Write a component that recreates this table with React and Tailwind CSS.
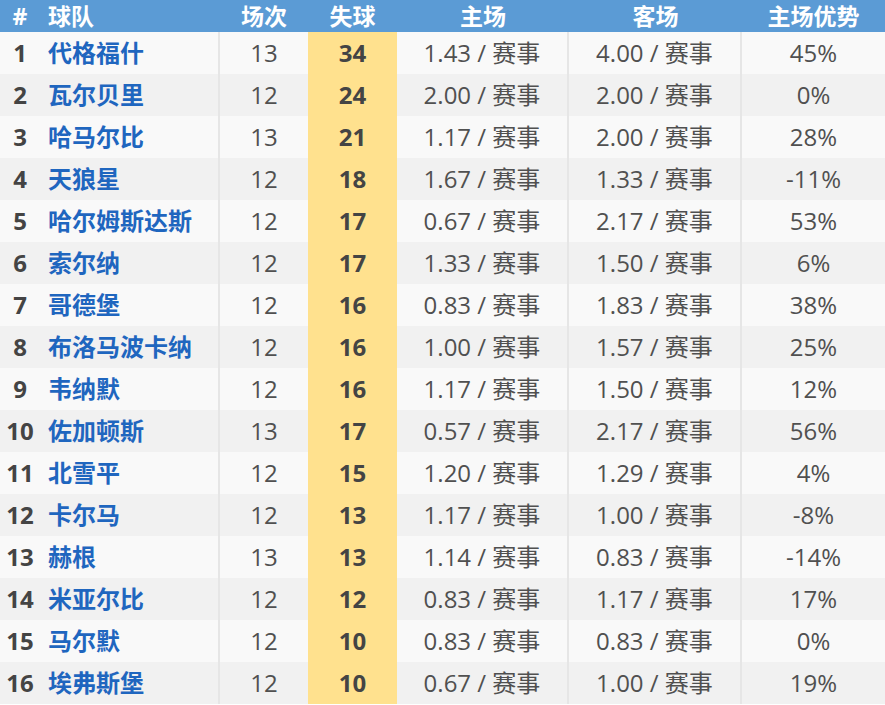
const rows = [
  [1, "代格福什", 13, 34, "1.43", "4.00", "45%"],
  [2, "瓦尔贝里", 12, 24, "2.00", "2.00", "0%"],
  [3, "哈马尔比", 13, 21, "1.17", "2.00", "28%"],
  [4, "天狼星", 12, 18, "1.67", "1.33", "-11%"],
  [5, "哈尔姆斯达斯", 12, 17, "0.67", "2.17", "53%"],
  [6, "索尔纳", 12, 17, "1.33", "1.50", "6%"],
  [7, "哥德堡", 12, 16, "0.83", "1.83", "38%"],
  [8, "布洛马波卡纳", 12, 16, "1.00", "1.57", "25%"],
  [9, "韦纳默", 12, 16, "1.17", "1.50", "12%"],
  [10, "佐加顿斯", 13, 17, "0.57", "2.17", "56%"],
  [11, "北雪平", 12, 15, "1.20", "1.29", "4%"],
  [12, "卡尔马", 12, 13, "1.17", "1.00", "-8%"],
  [13, "赫根", 13, 13, "1.14", "0.83", "-14%"],
  [14, "米亚尔比", 12, 12, "0.83", "1.17", "17%"],
  [15, "马尔默", 12, 10, "0.83", "0.83", "0%"],
  [16, "埃弗斯堡", 12, 10, "0.67", "1.00", "19%"],
];

const cols = "grid grid-cols-[40px_180px_88px_89px_172px_173px_143px]";

export default function App() {
  return (
    <div
      className="w-[885px] h-[705px] overflow-hidden bg-white"
      style={{ fontFamily: '"Open Sans", "Noto Sans CJK SC", sans-serif' }}
    >
      <div className={`${cols} h-[32px] bg-[#5b9bd5] text-white font-bold text-[23px] leading-none items-center`}>
        <div className="text-center">#</div>
        <div className="pl-[8px]">球队</div>
        <div className="text-center">场次</div>
        <div className="text-center">失球</div>
        <div className="text-center">主场</div>
        <div className="text-center">客场</div>
        <div className="text-center">主场优势</div>
      </div>
      {rows.map((r, i) => (
        <div
          key={r[0]}
          className={`${cols} h-[42px] text-[24px] leading-none text-[#505050] ${i % 2 === 0 ? "bg-[#f9f9f9]" : "bg-[#f1f1f1]"}`}
        >
          <div className="flex items-center justify-center font-bold text-[#444]">{r[0]}</div>
          <div className="flex items-center pl-[8px] font-bold text-[#1f66bf] border-r-2 border-[#e6e6e6]">{r[1]}</div>
          <div className="flex items-center justify-center">{r[2]}</div>
          <div className="flex items-center justify-center bg-[#ffe18e] font-bold text-[#444]">{r[3]}</div>
          <div className="flex items-center justify-center border-r-2 border-[#e6e6e6]">{r[4]} / 赛事</div>
          <div className="flex items-center justify-center border-r-2 border-[#e6e6e6]">{r[5]} / 赛事</div>
          <div className="flex items-center justify-center">{r[6]}</div>
        </div>
      ))}
    </div>
  );
}
